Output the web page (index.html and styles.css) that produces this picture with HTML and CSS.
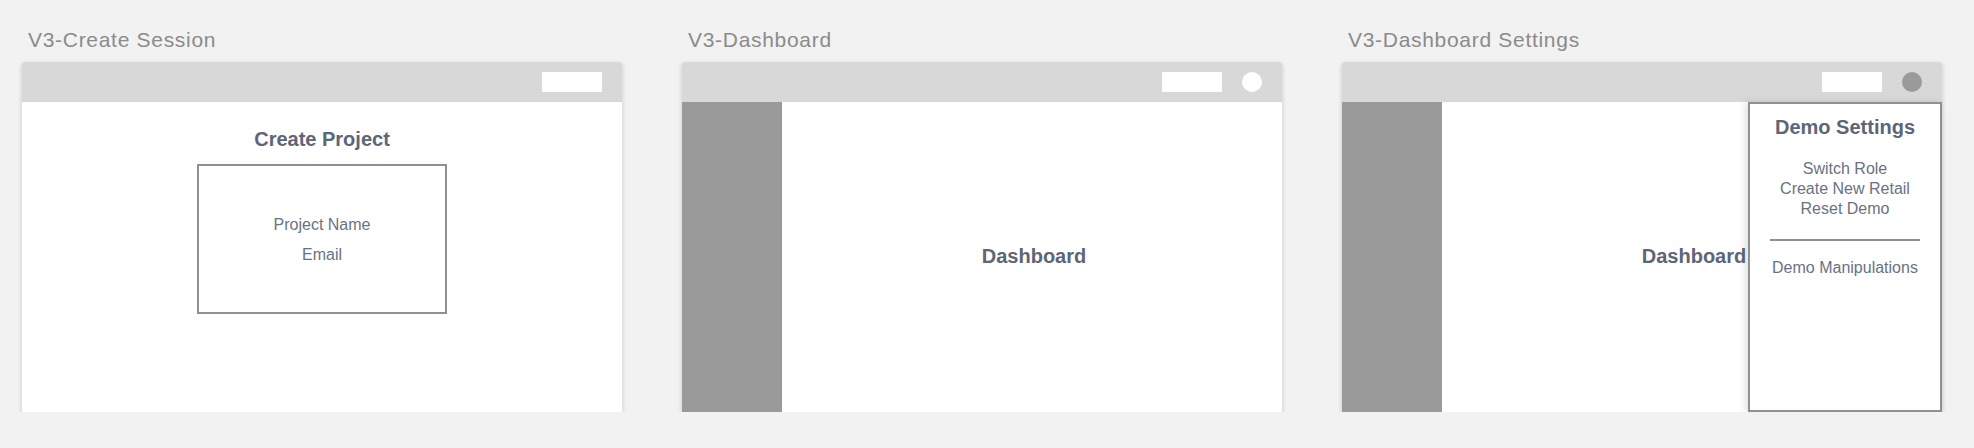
FILE: index.html
```html
<!DOCTYPE html>
<html>
<head>
<meta charset="utf-8">
<link rel="stylesheet" href="styles.css">
</head>
<body>
<div class="board">
  <section class="artboard">
    <div class="art-title">V3-Create Session</div>
    <div class="frame">
      <div class="topbar">
        <div class="btn"></div>
      </div>
      <div class="body body-create">
        <div class="heading">Create Project</div>
        <div class="form-box">
          <div class="field">Project Name</div>
          <div class="field">Email</div>
        </div>
      </div>
    </div>
  </section>

  <section class="artboard">
    <div class="art-title">V3-Dashboard</div>
    <div class="frame">
      <div class="topbar">
        <div class="btn"></div>
        <div class="avatar"></div>
      </div>
      <div class="body body-dash">
        <div class="sidebar"></div>
        <div class="main">
          <div class="heading">Dashboard</div>
        </div>
      </div>
    </div>
  </section>

  <section class="artboard">
    <div class="art-title">V3-Dashboard Settings</div>
    <div class="frame">
      <div class="topbar">
        <div class="btn"></div>
        <div class="avatar avatar-active"></div>
      </div>
      <div class="body body-dash">
        <div class="sidebar"></div>
        <div class="main">
          <div class="heading">Dashboard</div>
        </div>
        <div class="panel">
          <div class="heading">Demo Settings</div>
          <div class="menu">
            <div class="item">Switch Role</div>
            <div class="item">Create New Retail</div>
            <div class="item">Reset Demo</div>
          </div>
          <div class="divider"></div>
          <div class="item">Demo Manipulations</div>
        </div>
      </div>
    </div>
  </section>
</div>
</body>
</html>
```

FILE: styles.css
```css
html, body {
  margin: 0;
  padding: 0;
  background: #f2f2f2;
  font-family: "Liberation Sans", Arial, Helvetica, sans-serif;
}

.board {
  display: flex;
  gap: 60px;
  padding: 28px 0 0 22px;
}

.artboard {
  width: 600px;
  display: flex;
  flex-direction: column;
}

.art-title {
  font-size: 21px;
  line-height: 24px;
  letter-spacing: 0.7px;
  color: #8b8b8b;
  padding-left: 6px;
  margin-bottom: 10px;
  white-space: nowrap;
}

.frame {
  width: 600px;
  height: 350px;
  background: #ffffff;
  border-radius: 2px 2px 0 0;
  box-shadow: 0 2px 5px rgba(0, 0, 0, 0.18);
  display: flex;
  flex-direction: column;
}

.topbar {
  height: 40px;
  flex: none;
  background: #d8d8d8;
  border-radius: 2px 2px 0 0;
  display: flex;
  justify-content: flex-end;
  align-items: center;
  gap: 20px;
  padding-right: 20px;
}

.btn {
  width: 60px;
  height: 20px;
  background: #ffffff;
}

.avatar {
  width: 20px;
  height: 20px;
  border-radius: 50%;
  background: #ffffff;
}

.avatar-active {
  background: #9a9a9a;
}

.body {
  flex: 1;
  position: relative;
}

.heading {
  font-size: 20px;
  line-height: 24px;
  font-weight: bold;
  color: #5d6577;
  text-align: center;
  white-space: nowrap;
}

.body-create {
  display: flex;
  flex-direction: column;
  align-items: center;
  padding-top: 25px;
}

.form-box {
  margin-top: 13px;
  width: 250px;
  height: 150px;
  box-sizing: border-box;
  border: 2px solid #909090;
  display: flex;
  flex-direction: column;
  justify-content: center;
  align-items: center;
  padding-top: 2px;
}

.field {
  font-size: 16px;
  line-height: 30px;
  color: #6a7284;
}

.body-dash {
  display: flex;
}

.sidebar {
  width: 100px;
  background: #9a9a9a;
}

.main {
  flex: 1;
  display: flex;
  justify-content: center;
  align-items: center;
  padding-left: 4px;
  padding-bottom: 2px;
}

.panel {
  position: absolute;
  top: 0;
  right: 0;
  bottom: 0;
  width: 194px;
  box-sizing: border-box;
  border: 2px solid #909090;
  background: #ffffff;
  box-shadow: -3px 0 7px rgba(0, 0, 0, 0.12);
  display: flex;
  flex-direction: column;
  align-items: center;
  padding-top: 11px;
}

.menu {
  margin-top: 20px;
  display: flex;
  flex-direction: column;
  align-items: center;
}

.item {
  font-size: 16px;
  line-height: 20px;
  color: #6a7284;
  text-align: center;
  white-space: nowrap;
}

.divider {
  width: 150px;
  height: 2px;
  background: #909090;
  margin: 20px 0 17px;
}
```
